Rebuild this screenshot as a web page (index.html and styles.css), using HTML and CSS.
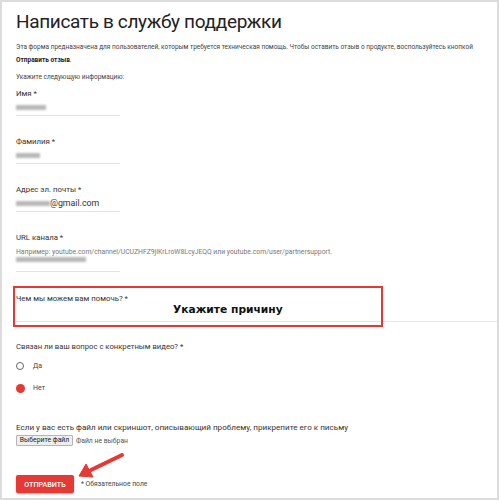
FILE: index.html
```html
<!DOCTYPE html>
<html lang="ru">
<head>
    <meta charset="UTF-8">
    <meta name="viewport" content="width=device-width, initial-scale=1.0">
    <title>Написать в службу поддержки</title>
    <link rel="stylesheet" href="styles.css">
</head>
<body>
    <div class="frame">
        <h1>Написать в службу поддержки</h1>

        <p class="intro">Эта форма предназначена для пользователей, которым требуется техническая помощь. Чтобы оставить отзыв о продукте, воспользуйтесь кнопкой <b>Отправить отзыв</b>.</p>
        <p class="intro note">Укажите следующую информацию:</p>

        <div class="field">
            <label>Имя *</label>
            <div class="value"><span class="blur" style="width: 30px"></span></div>
        </div>

        <div class="field">
            <label>Фамилия *</label>
            <div class="value"><span class="blur" style="width: 24px"></span></div>
        </div>

        <div class="field">
            <label>Адрес эл. почты *</label>
            <div class="value"><span class="blur" style="width: 34px"></span>@gmail.com</div>
        </div>

        <div class="field">
            <label>URL канала *</label>
            <p class="hint">Например: youtube.com/channel/UCUZHFZ9jIKrLroW8LcyJEQQ или youtube.com/user/partnersupport.</p>
            <div class="value short"><span class="blur" style="width: 70px"></span></div>
        </div>

        <div class="help">
            <label>Чем мы можем вам помочь? *</label>
            <div class="reason">Укажите причину</div>
            <div class="highlight"></div>
        </div>

        <div class="question">
            <p>Связан ли ваш вопрос с конкретным видео? *</p>
            <div class="radio"><span class="dot"></span>Да</div>
            <div class="radio"><span class="dot on"></span>Нет</div>
        </div>

        <div class="attach">
            <p>Если у вас есть файл или скриншот, описывающий проблему, прикрепите его к письму</p>
            <div class="file"><span class="file-btn">Выберите файл</span>Файл не выбран</div>
        </div>

        <div class="actions">
            <button class="send">ОТПРАВИТЬ</button>
            <span class="required">* Обязательное поле</span>
            <svg class="arrow" width="50" height="30" viewBox="0 0 50 30">
                <path d="M46 4 L15 19" stroke="#e53935" stroke-width="4" stroke-linecap="round" fill="none"/>
                <path d="M3 25 L10 13 L17 26 Z" fill="#e53935" stroke="#e53935" stroke-width="1" stroke-linejoin="round"/>
            </svg>
        </div>
    </div>
</body>
</html>
```

FILE: styles.css
```css
body {
    margin: 0;
    background: #fff;
    font-family: Roboto, "Liberation Sans", sans-serif;
    color: #333;
}

.frame {
    box-sizing: border-box;
    height: 500px;
    border: 2px solid #dcdcdc;
    padding: 0 6px 0 14px;
    overflow: hidden;
}

h1 {
    margin: 9px 0 0;
    font-size: 19px;
    letter-spacing: -0.35px;
    font-weight: 400;
    color: #222;
    line-height: 22px;
}

.intro {
    margin: 8px 0 0;
    font-size: 6.5px;
    line-height: 13px;
    color: #444;
}

.intro b {
    color: #222;
}

.intro.note {
    margin-top: 4px;
}

.field {
    margin-top: 21px;
    width: 104px;
}

.note + .field {
    margin-top: 5px;
}

label {
    display: block;
    font-size: 7.8px;
    line-height: 10px;
    color: #333;
}

.value {
    display: flex;
    align-items: center;
    height: 16px;
    font-size: 8.8px;
    border-bottom: 1px solid #e2e2e2;
    color: #333;
    white-space: nowrap;
}

.blur {
    display: inline-block;
    height: 5px;
    background: #b8b8b8;
    filter: blur(1px);
}

.field .hint {
    margin: 4px 0 0;
    width: 420px;
    font-size: 6.8px;
    line-height: 10px;
    color: #777;
    white-space: nowrap;
}

.value.short {
    height: 14px;
    align-items: flex-start;
}

.help {
    position: relative;
    margin: 14px -6px 0 0;
    padding: 8px 0 5px;
    border-bottom: 1px solid #e6e6e6;
}

.reason {
    margin-left: 157px;
    font-family: "DejaVu Sans", sans-serif;
    font-weight: bold;
    font-size: 10.7px;
    line-height: 12px;
    color: #111;
}

.highlight {
    box-sizing: border-box;
    position: absolute;
    left: -3px;
    top: 0;
    width: 370px;
    height: 41px;
    border: 2px solid #e53935;
}

.question {
    margin-top: 20px;
}

.question p,
.attach p {
    margin: 0;
    font-size: 7.7px;
    line-height: 10px;
    color: #333;
}

.attach p {
    font-size: 8.1px;
}

.radio {
    display: flex;
    align-items: center;
    height: 12px;
    margin-top: 8px;
    font-size: 7px;
    color: #444;
}

.radio + .radio {
    margin-top: 10px;
}

.dot {
    box-sizing: border-box;
    width: 8px;
    height: 8px;
    border: 1.5px solid #666;
    border-radius: 50%;
    margin-right: 9px;
}

.dot.on {
    width: 9px;
    height: 9px;
    border: none;
    background: #e53935;
    margin-right: 8px;
}

.attach {
    margin-top: 28px;
}

.file {
    display: flex;
    align-items: center;
    margin-top: 3px;
    font-size: 6.8px;
    color: #555;
}

.file-btn {
    box-sizing: border-box;
    width: 57px;
    height: 11px;
    line-height: 9px;
    text-align: center;
    margin-right: 3px;
    border: 1px solid #b5b5b5;
    border-radius: 1px;
    background: #eee;
    color: #222;
    font-size: 6.8px;
}

.actions {
    position: relative;
    display: flex;
    align-items: center;
    margin-top: 29px;
}

.send {
    height: 18px;
    width: 58px;
    padding: 0;
    border: none;
    border-radius: 2px;
    background: #e53935;
    color: #fff;
    font-family: Roboto, "Liberation Sans", sans-serif;
    font-size: 7.2px;
    font-weight: 500;
    box-shadow: 0 1px 2px rgba(0, 0, 0, 0.35);
}

.required {
    margin-left: 7px;
    font-size: 6.8px;
    color: #444;
}

.arrow {
    position: absolute;
    left: 60px;
    top: -24px;
}
```
